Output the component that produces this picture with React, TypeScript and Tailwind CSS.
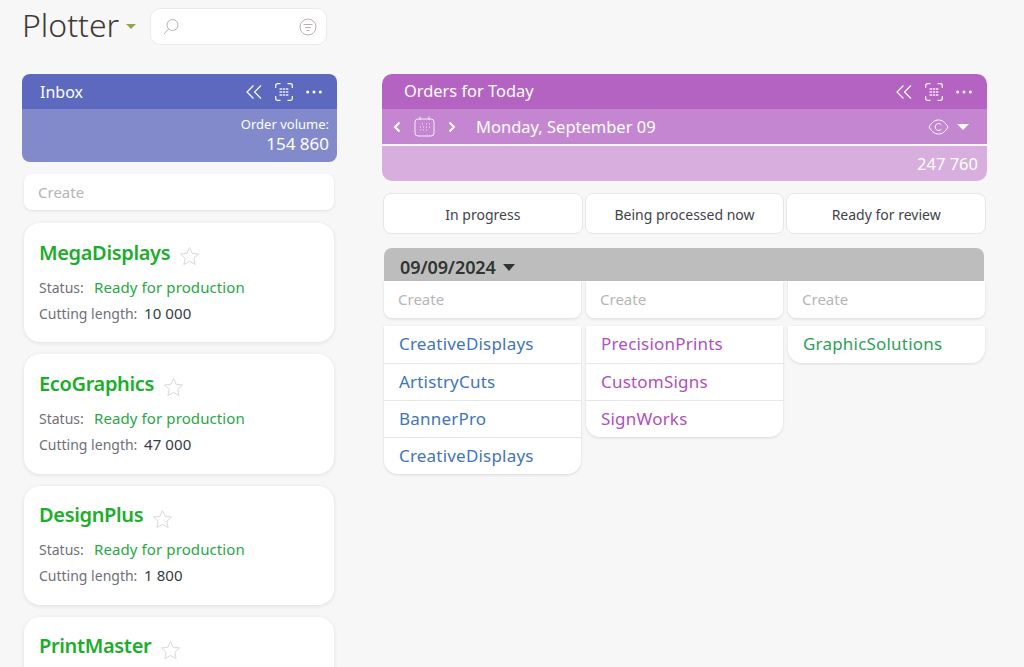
import React from 'react';

const FONT = { fontFamily: '"Noto Sans", sans-serif' };

// the last card runs off the bottom of the page, only its name is visible
const orders = [
    { name: 'MegaDisplays', length: '10 000' },
    { name: 'EcoGraphics', length: '47 000' },
    { name: 'DesignPlus', length: '1 800' },
    { name: 'PrintMaster', length: '' },
];

const columns = [
    { title: 'In progress', color: 'text-[#3f75b8]', items: ['CreativeDisplays', 'ArtistryCuts', 'BannerPro', 'CreativeDisplays'] },
    { title: 'Being processed now', color: 'text-[#b04fbd]', items: ['PrecisionPrints', 'CustomSigns', 'SignWorks'] },
    { title: 'Ready for review', color: 'text-[#2f9e58]', items: ['GraphicSolutions'] },
];

const Chevrons = () => (
    <svg width="16" height="14" viewBox="0 0 16 14" fill="none" stroke="white" strokeWidth="1.2">
        <path d="M7.500 0.500 1 7l6.500 6.500M15 0.500 8.500 7l6.500 6.500" />
    </svg>
);

const ScanIcon = () => (
    <svg width="18" height="18" viewBox="0 0 18 18" fill="none" stroke="white" strokeWidth="1.2">
        <path d="M0.700 5V2.500A1.800 1.800 0 0 1 2.500 0.700H5.500M12.500 0.700h3a1.800 1.800 0 0 1 1.800 1.800V5M17.300 13v2.500a1.800 1.800 0 0 1-1.800 1.800h-3M5.500 17.300h-3a1.800 1.800 0 0 1-1.800-1.800V13" />
        <path d="M4.500 6h9M4.500 9h9M4.500 12h9" strokeWidth="1.300" strokeDasharray="2.500 0.700" opacity="0.85" />
    </svg>
);

const Dots = () => (
    <svg width="16" height="4" viewBox="0 0 16 4" fill="white">
        <circle cx="1.700" cy="2" r="1.500" />
        <circle cx="8" cy="2" r="1.500" />
        <circle cx="14.300" cy="2" r="1.500" />
    </svg>
);

const Star = () => (
    <svg width="21" height="20" viewBox="0 0 21 20" fill="none" stroke="#dcd6da" strokeWidth="1">
        <path d="M10.500 1.500 13.200 7.300 19.500 8 14.800 12.300 16.100 18.500 10.500 15.400 4.900 18.500 6.200 12.300 1.500 8 7.800 7.300Z" />
    </svg>
);

const OrderCard = ({ name, length }: { name: string; length: string }) => (
    <div className="ml-[2px] mr-[3px] h-[119.33px] shrink-0 rounded-[16px] bg-white pl-[15px] pt-[15px] shadow-[0_1px_4px_rgba(0,0,0,0.1)]">
        <div className="flex h-[29px] items-center">
            <span className="text-[20px] font-semibold tracking-[-0.35px] text-[#1bad2b]">{name}</span>
            <span className="ml-[9px] mt-[7px]">
                <Star />
            </span>
        </div>
        {length && (
            <>
                <div className="mt-[7px] flex h-[26px] items-center text-[14px] text-[#6f6f78]">
                    <span className="w-[55px]">Status:</span>
                    <span className="text-[15px] tracking-[0.1px] text-[#28a745]">Ready for production</span>
                </div>
                <div className="flex h-[26px] items-center text-[14px] text-[#6f6f78]">
                    <span className="w-[105px]">Cutting length:</span>
                    <span className="text-[15px] tracking-[0.1px] text-[#333c44]">{length}</span>
                </div>
            </>
        )}
    </div>
);

export default function App() {
    return (
        <div style={FONT} className="flex h-[667px] w-[1024px] flex-col overflow-hidden bg-[#f7f7f7]">
            {/* Top bar */}
            <div className="flex h-[74px] shrink-0 items-start pl-[22px] pt-[7px]">
                <span className="text-[32px] leading-[36px] font-light text-[#3f3a36]">Plotter</span>
                <span className="ml-[7px] mt-[17px] h-0 w-0 border-x-[5px] border-t-[5px] border-x-transparent border-t-[#9aa24a]" />
                <div className="ml-[14px] mt-[1px] flex h-[37px] w-[177px] items-center justify-between rounded-[10px] border border-[#ebebeb] bg-white pl-[11px] pr-[9px]">
                    <svg width="18" height="18" viewBox="0 0 18 18" fill="none" stroke="#b9b2b2" strokeWidth="1">
                        <circle cx="10.500" cy="7" r="5.500" />
                        <path d="M6.500 11 2 16" />
                    </svg>
                    <svg width="18" height="18" viewBox="0 0 18 18" fill="none" stroke="#b9b2b2" strokeWidth="1">
                        <circle cx="9" cy="9" r="8" />
                        <path d="M4.500 6.500h9M6 9.500h6M7.500 12.500h3" />
                    </svg>
                </div>
            </div>

            <div className="flex min-h-0 flex-1 items-start">
                {/* Inbox column */}
                <div className="ml-[22px] flex h-full w-[315px] shrink-0 flex-col">
                    <div className="h-[88px] shrink-0 overflow-hidden rounded-[8px] text-white">
                        <div className="flex h-[35px] items-center justify-between bg-[#5c69bf] pl-[18px] pr-[15px]">
                            <span className="text-[16px]">Inbox</span>
                            <div className="flex items-center gap-[13px]">
                                <Chevrons />
                                <ScanIcon />
                                <Dots />
                            </div>
                        </div>
                        <div className="flex h-[53px] flex-col items-end bg-[#828acb] pr-[8px] pt-[6px]">
                            <span className="text-[13px] leading-[18px]">Order volume:</span>
                            <span className="text-[17px] leading-[22px]">154 860</span>
                        </div>
                    </div>
                    <div className="ml-[2px] mr-[3px] mt-[12px] flex h-[36px] shrink-0 items-center rounded-[8px] bg-white pl-[14px] text-[15px] text-[#b5b5b5] shadow-[0_1px_3px_rgba(0,0,0,0.1)]">
                        Create
                    </div>
                    <div className="mt-[13px] flex flex-col gap-[12px]">
                        {orders.map((order) => (
                            <OrderCard key={order.name} {...order} />
                        ))}
                    </div>
                </div>

                {/* Today column */}
                <div className="ml-[45px] w-[605px] shrink-0">
                    <div className="h-[107px] overflow-hidden rounded-[10px] text-white">
                        <div className="flex h-[35px] items-center justify-between bg-[#b563c2] pl-[22px] pr-[15px]">
                            <span className="text-[16.400px]">Orders for Today</span>
                            <div className="flex items-center gap-[13px]">
                                <Chevrons />
                                <ScanIcon />
                                <Dots />
                            </div>
                        </div>
                        <div className="flex h-[35px] items-center bg-[#c586d1] pl-[11px] pr-[18px]">
                            <svg width="8" height="12" viewBox="0 0 8 12" fill="none" stroke="white" strokeWidth="2">
                                <path d="M6.500 1.500 2 6l4.500 4.500" />
                            </svg>
                            <svg className="ml-[13px]" width="21" height="21" viewBox="0 0 21 21" fill="none" stroke="white" strokeWidth="1" opacity="0.85">
                                <rect x="1" y="3" width="19" height="17" rx="3" />
                                <path d="M6 0.500V4M15 0.500V4" />
                                <path d="M8 8h1M12 8h1M15 8h1M6 11h1M9 11h1M12 11h1M15 11h1M6 14h1M9 14h1M12 14h1" strokeWidth="1.200" />
                            </svg>
                            <svg className="ml-[13px]" width="8" height="12" viewBox="0 0 8 12" fill="none" stroke="white" strokeWidth="2">
                                <path d="M1.500 1.500 6 6l-4.500 4.500" />
                            </svg>
                            <span className="ml-[20px] pt-[2px] text-[16.500px]">Monday, September 09</span>
                            <div className="ml-auto flex items-center gap-[8px]">
                                <svg width="21" height="16" viewBox="0 0 21 16" fill="none" stroke="white" strokeWidth="1">
                                    <path d="M1 8C4 3 7 1 10.500 1S17 3 20 8c-3 5-6 7-9.500 7S4 13 1 8Z" />
                                    <path d="M13.500 6A3.500 3.500 0 1 0 13.500 10" />
                                </svg>
                                <span className="h-0 w-0 border-x-[6px] border-t-[6px] border-x-transparent border-t-white" />
                            </div>
                        </div>
                        <div className="mt-[2px] flex h-[35px] items-center justify-end bg-[#d8aede] pr-[9px] pt-[2px] text-[16.500px]">
                            247 760
                        </div>
                    </div>

                    <div className="mx-[1px] mt-[12px] grid w-[603px] grid-cols-3 gap-[2px]">
                        {columns.map((col) => (
                            <div key={col.title} className="flex h-[41px] items-center justify-center rounded-[8px] border border-[#e6e6e6] bg-white pt-[1px] text-[14px] text-[#3f4348]">
                                {col.title}
                            </div>
                        ))}
                    </div>

                    <div className="ml-[2px] mt-[14px] flex h-[33px] w-[600px] items-center rounded-t-[8px] bg-[#bdbdbd] pl-[16px] pt-[5px]">
                        <span className="text-[18px] font-semibold tracking-[-0.1px] text-[#2f3532]">09/09/2024</span>
                        <span className="ml-[7px] h-0 w-0 border-x-[6px] border-t-[7px] border-x-transparent border-t-[#2f3532]" />
                    </div>

                    <div className="ml-[2px] grid w-[601px] grid-cols-3 items-start gap-[5px]">
                        {columns.map((col) => (
                            <div key={col.title}>
                                <div className="flex h-[37px] items-center rounded-b-[8px] bg-white pl-[14px] text-[15px] text-[#b5b5b5] shadow-[0_1px_3px_rgba(0,0,0,0.12)]">
                                    Create
                                </div>
                                <div className="mt-[8px] overflow-hidden rounded-b-[14px] bg-white shadow-[0_1px_3px_rgba(0,0,0,0.12)]">
                                    {col.items.map((item, i) => (
                                        <div key={i} className={`flex h-[37px] items-center pb-[1px] pl-[15px] text-[17px] tracking-[0.2px] ${col.color} ${i > 0 ? 'border-t border-[#e6e6e6]' : ''}`}>
                                            {item}
                                        </div>
                                    ))}
                                </div>
                            </div>
                        ))}
                    </div>
                </div>
            </div>
        </div>
    );
}
